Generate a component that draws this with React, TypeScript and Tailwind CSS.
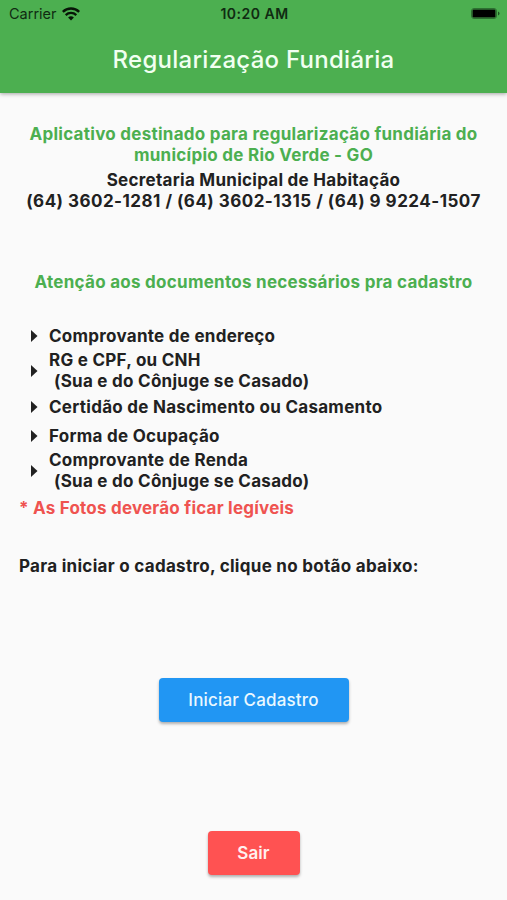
type DocumentItem = {
  title: string;
  detail?: string;
};

const documents: DocumentItem[] = [
  { title: 'Comprovante de endereço' },
  { title: 'RG e CPF, ou CNH', detail: '(Sua e do Cônjuge se Casado)' },
  { title: 'Certidão de Nascimento ou Casamento' },
  { title: 'Forma de Ocupação' },
  { title: 'Comprovante de Renda', detail: '(Sua e do Cônjuge se Casado)' },
];

function WifiIcon() {
  return (
    <svg width="18" height="14" viewBox="0 0 18 14" fill="none" stroke="#071507">
      <path d="M.8 4.9C5.3 .4 12.7 .4 17.2 4.9" strokeWidth="2.5" />
      <path d="M3.7 8.1C6.7 5.2 11.3 5.2 14.3 8.1" strokeWidth="2.3" />
      <path d="M6.1 10.5Q9 7.9 11.9 10.5L9 13.4Z" fill="#071507" stroke="none" />
    </svg>
  );
}

function BatteryIcon() {
  return (
    <svg width="29" height="11" viewBox="0 0 29 11">
      <rect x=".5" y=".5" width="25" height="10" rx="2.5" fill="none" stroke="#2d7031" />
      <rect x="1.5" y="1.5" width="23" height="8" rx="1.2" fill="#000" />
      <path d="M27 3.5Q28.5 4 28.5 5.5T27 7.5Z" fill="#1e5522" />
    </svg>
  );
}

export default function App() {
  return (
    <div className="flex h-[900px] w-[507px] flex-col bg-[#fafafa] font-['Inter',sans-serif] text-[#212121]">
      <header className="relative h-[93px] bg-[#4caf50] shadow-[0_1px_4px_rgba(0,0,0,0.35)]">
        {/* Status bar */}
        <div className="grid h-[27px] grid-cols-3 items-center pr-[7px] pl-[9px] text-[#102b12]">
          <div className="flex items-center gap-[5px] text-[14.5px]">
            <span>Carrier</span>
            <WifiIcon />
          </div>
          <span className="text-center text-[14px] font-semibold tracking-[0.5px]">10:20 AM</span>
          <div className="flex justify-end pb-px">
            <BatteryIcon />
          </div>
        </div>

        <h1 className="mt-4 text-center text-[24px] leading-[34px] font-medium tracking-[0.27px] text-[#f1fff1]">
          Regularização Fundiária
        </h1>
      </header>

      <main className="flex flex-1 flex-col px-[19px] pt-[31px] text-[17px] leading-[21px] font-[650] tracking-[0.27px]">
        <p className="text-center text-[#4caf50]">
          Aplicativo destinado para regularização fundiária do
          <br />
          município de Rio Verde - GO
        </p>
        <p className="mt-1 text-center whitespace-nowrap">
          Secretaria Municipal de Habitação
          <br />
          <span className="tracking-[0.48px]">
            (64) 3602-1281 / (64) 3602-1315 / (64) 9 9224-1507
          </span>
        </p>

        <h2 className="mt-[60px] text-center text-[#4caf50]">
          Atenção aos documentos necessários pra cadastro
        </h2>

        <ul className="mt-[28px]">
          {documents.map((item) => (
            <li
              key={item.title}
              className={`flex items-center ${item.detail ? 'h-[42px]' : 'h-[29px]'}`}
            >
              <svg className="mr-[11px] ml-[12px] shrink-0" width="7" height="12" viewBox="0 0 7 12">
                <path d="M0 0L6.5 6L0 12Z" fill="#212121" />
              </svg>
              <div className={item.detail ? '' : 'pt-px'}>
                {item.title}
                {item.detail && <div className="pl-[5px]">{item.detail}</div>}
              </div>
            </li>
          ))}
        </ul>
        <p className="mt-[6px] tracking-[0.22px] text-[#ef5350]">
          * As Fotos deverão ficar legíveis
        </p>

        <p className="mt-[37px] tracking-[0.29px]">
          Para iniciar o cadastro, clique no botão abaixo:
        </p>

        <button className="mt-[101px] h-[44px] w-[190px] self-center rounded-[4px] bg-[#2196f3] font-medium tracking-[0.16px] text-[#eaf8ff] shadow-[0_2px_3px_rgba(0,0,0,0.3)]">
          Iniciar Cadastro
        </button>
        <button className="mt-[109px] h-[44px] w-[92px] self-center rounded-[4px] bg-[#ff5252] font-semibold tracking-[0.1px] text-[#fff0f0] shadow-[0_2px_3px_rgba(0,0,0,0.3)]">
          Sair
        </button>
      </main>
    </div>
  );
}
